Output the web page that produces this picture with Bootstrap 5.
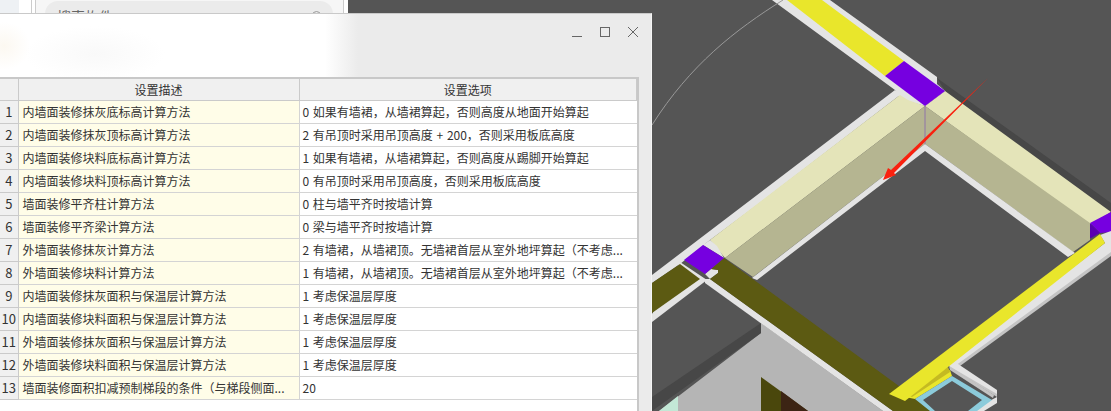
<!DOCTYPE html>
<html lang="zh">
<head>
  <meta charset="UTF-8" />
  <meta name="viewport" content="width=device-width, initial-scale=1" />
  <title>设置</title>
  <link href="https://cdn.jsdelivr.net/npm/bootstrap@5.3.3/dist/css/bootstrap.min.css" rel="stylesheet" />
  <style>
    body {
      width: 1111px;
      height: 411px;
      overflow: hidden;
      background: #555555;
      font-family: "Noto Sans CJK SC", "Liberation Sans", sans-serif;
      font-size: 12px;
      color: #333;
      position: relative;
    }
    .cad-view { position: absolute; left: 0; top: 0; }
    .back-panel {
      position: absolute; left: 0; top: 0;
      width: 348px; height: 40px;
      background: #f6f6f6;
      overflow: hidden;
    }
    .back-side { width: 19px; background: #eef1f4; }
    .back-gap { width: 12px; background: #fff; }
    .back-gap2 { width: 5px; background: #fff; border-left: 1px solid #ccc; border-right: 1px solid #ccc; }
    .back-end { width: 5px; background: #fff; border-left: 1px solid #ccc; }
    .back-search {
      width: 288px; height: 30px;
      margin: 1px 10px 0 9px;
      background: #ebebeb;
      border-radius: 13px;
      padding: 5px 12px;
      color: #666;
      font-size: 14px;
    }
    .back-lens { width: 9px; height: 9px; margin-top: 5px; border: 1px solid #999; border-radius: 50%; }
    .dlg {
      position: absolute; left: 0; top: 13px;
      width: 652px; height: 398px;
      background: #ebebeb;
      border-top: 1px solid #c9c9c9;
      border-right: 1px solid #f5f5f5;
    }
    .dlg-title {
      height: 63px;
      background:
        radial-gradient(ellipse 26px 24px at 4px 32px, #fcf8f1, rgba(252, 248, 241, 0)),
        radial-gradient(ellipse 70px 28px at 95px 40px, #f9f9f9, rgba(249, 249, 249, 0)),
        linear-gradient(90deg, #fff 0, #fff 325px, #ebebeb 358px);
    }
    .dlg-btns { padding: 12px 12px 0 0; gap: 16px; }
    .sheet {
      width: 639px; height: 334px;
      background: #fff;
      border-top: 2px solid #c8c8c8;
      border-right: 2px solid #c8c8c8;
    }
    .sheet table { table-layout: fixed; width: 637px; border-collapse: collapse; margin: 0; }
    .sheet th, .sheet td {
      padding: 0 3px;
      font-weight: 400;
      font-size: 12px;
      line-height: 22px;
      color: #333;
      border: 0;
      border-bottom: 1px solid #d4d4d4;
      border-right: 1px solid #d4d4d4;
      white-space: nowrap;
      overflow: hidden;
      box-shadow: none;
      background: #fff;
    }
    .sheet th { line-height: 21px; background: #f0f0f0; text-align: center; border-color: #cacaca; }
    .sheet td.rownum { background: #f0f0f0; text-align: center; padding: 0; border-color: #cacaca; font-size: 13px; }
    .sheet td.desc { background: #fffde8; padding-left: 4px; }
    .sheet td.opt { border-right: 0; word-spacing: 1px; }
    .col-num { width: 18px; }
    .col-desc { width: 281px; }
  </style>
</head>
<body>
  <!-- 后面的三维视图 -->
  <svg class="cad-view" width="1111" height="411" viewBox="0 0 1111 411">
    <polygon fill="#474747" points="937,78 1111,203 1111,215 945,91"/>
    <polygon fill="#e4e4e4" points="772,0 830,0 937,77 937,84 945,91 925,106 900,99 895,90"/>
    <polygon fill="#e9e62b" points="787,0 822,0 904,61 885,76"/>
    <polygon fill="#e4e4e4" points="895,90 900,95 757,205 710,240 680,264 652,283 652,275"/>
    <polygon fill="#e4e4b9" points="900,95 908,100 925,106 945,91 1111,212 1090,225 925,106 725,258 710,240"/>
    <polygon fill="#b5b591" points="925,106 1090,223 1090,240 1073,252 925,144 753,277 725,258"/>
    <polygon fill="#e4e4e4" points="925,144 1075,253 1068,257 925,151 757,280 752,278"/>
    <polygon fill="#7600e0" points="904,61 945,91 925,106 885,76"/>
    <line x1="925" y1="106" x2="925" y2="144" stroke="#8f74a8" stroke-width="1"/>
    <polygon fill="#e4e4e4" points="703,245 710,240 717,246 724,258"/>
    <polygon fill="#e4e4e4" points="705,274 711,269 718,270 718,273 710,279"/>
    <polygon fill="#7600e0" points="1090,223 1111,212 1111,232 1100,233"/>
    <polygon fill="#5a00b0" points="1090,223 1100,233 1091,238 1090,238"/>
    <polygon fill="#e4e4e4" points="680,262 707,280 652,322 652,314"/>
    <polygon fill="#5c5a12" points="680,264 700,279 652,313 652,283"/>
    <polygon fill="#b5b5b5" points="761,323 883,411 659,411 761,333"/>
    <polygon fill="#474747" points="761,323 761,333 652,411 652,397"/>
    <polygon fill="#c3e8d6" points="659,411 678,396 678,411"/>
    <polygon fill="#e4e4e4" points="705,279 710,279 893,411 883,411 705,283"/>
    <polygon fill="#5c5a12" points="724,258 933,411 893,411 710,279 718,273 718,270 711,269"/>
    <polygon fill="#7600e0" points="703,245 724,258 705,274 684,260"/>
    <polygon fill="#4a470c" points="761,377 808,411 761,411"/>
    <polygon fill="#3c2414" points="781,391 808,411 781,411"/>
    <polygon fill="#c4c4c4" points="1111,248 1111,256 960,366 950,364"/>
    <polygon fill="#e4e4e4" points="1111,231 1111,252 955,366 949,362 1105,243 1100,235"/>
    <polygon fill="#c4c4c4" points="950,368 997,397 997,392 950,362"/>
    <polygon fill="#e4e4e4" points="949,362 955,362 997,390 997,394 949,366"/>
    <polygon fill="#c4c4c4" points="949,366 994,395 993,398 950,370"/>
    <polygon fill="#e4e4e4" points="997,397 997,403 984,411 970,411"/>
    <polygon fill="#e9e62b" points="950,370 952,376 915,399 905,397"/>
    <polygon fill="#c4ba22" points="948,367 950,372 912,397 903,393"/>
    <polygon fill="#8ccbdb" points="952,376 992,400 977,411 968,411 982,400 952,381 923,400 935,411 930,411 915,399"/>
    <polygon fill="#e9e62b" points="1100,234 1105,243 905,401 889,394"/>
    <path d="M783 0 C 735 30, 690 65, 652 125" fill="none" stroke="#999" stroke-width="1"/>
    <polygon fill="#f9210f" points="988,78 894,173 896,175 883,180 888,168 891,170"/>
  </svg>

  <div class="back-panel d-flex">
    <div class="back-side"></div>
    <div class="back-gap"></div>
    <div class="back-gap2"></div>
    <div class="back-search d-flex justify-content-between"><span>搜索构件</span><span class="back-lens"></span></div>
    <div class="back-end"></div>
  </div>

  <!-- 设置对话框 -->
  <div class="dlg">
    <div class="dlg-title d-flex justify-content-end align-items-start">
      <div class="dlg-btns d-flex">
        <svg width="12" height="12" viewBox="0 0 12 12"><line x1="1" y1="10.5" x2="11" y2="10.5" stroke="#666"/></svg>
        <svg width="12" height="12" viewBox="0 0 12 12"><rect x="1.5" y="1.5" width="9" height="9" fill="none" stroke="#666"/></svg>
        <svg width="12" height="12" viewBox="0 0 12 12"><path d="M1 1 L11 11 M11 1 L1 11" stroke="#666" fill="none"/></svg>
      </div>
    </div>
    <div class="sheet">
      <table class="table mb-0">
        <colgroup><col class="col-num"><col class="col-desc"><col></colgroup>
        <thead>
          <tr><th></th><th>设置描述</th><th class="opt">设置选项</th></tr>
        </thead>
        <tbody id="rows"></tbody>
      </table>
    </div>
  </div>

  <script>
    const rows = [
      ["内墙面装修抹灰底标高计算方法", "0 如果有墙裙，从墙裙算起，否则高度从地面开始算起"],
      ["内墙面装修抹灰顶标高计算方法", "2 有吊顶时采用吊顶高度 + 200，否则采用板底高度"],
      ["内墙面装修块料底标高计算方法", "1 如果有墙裙，从墙裙算起，否则高度从踢脚开始算起"],
      ["内墙面装修块料顶标高计算方法", "0 有吊顶时采用吊顶高度，否则采用板底高度"],
      ["墙面装修平齐柱计算方法", "0 柱与墙平齐时按墙计算"],
      ["墙面装修平齐梁计算方法", "0 梁与墙平齐时按墙计算"],
      ["外墙面装修抹灰计算方法", "2 有墙裙，从墙裙顶。无墙裙首层从室外地坪算起（不考虑..."],
      ["外墙面装修块料计算方法", "1 有墙裙，从墙裙顶。无墙裙首层从室外地坪算起（不考虑..."],
      ["内墙面装修抹灰面积与保温层计算方法", "1 考虑保温层厚度"],
      ["内墙面装修块料面积与保温层计算方法", "1 考虑保温层厚度"],
      ["外墙面装修抹灰面积与保温层计算方法", "1 考虑保温层厚度"],
      ["外墙面装修块料面积与保温层计算方法", "1 考虑保温层厚度"],
      ["墙面装修面积扣减预制梯段的条件（与梯段侧面...", "20"]
    ];
    document.getElementById("rows").innerHTML = rows.map((r, i) =>
      `<tr><td class="rownum">${i + 1}</td><td class="desc">${r[0]}</td><td class="opt">${r[1]}</td></tr>`
    ).join("");
  </script>
  <script src="https://cdn.jsdelivr.net/npm/bootstrap@5.3.3/dist/js/bootstrap.bundle.min.js"></script>
</body>
</html>
